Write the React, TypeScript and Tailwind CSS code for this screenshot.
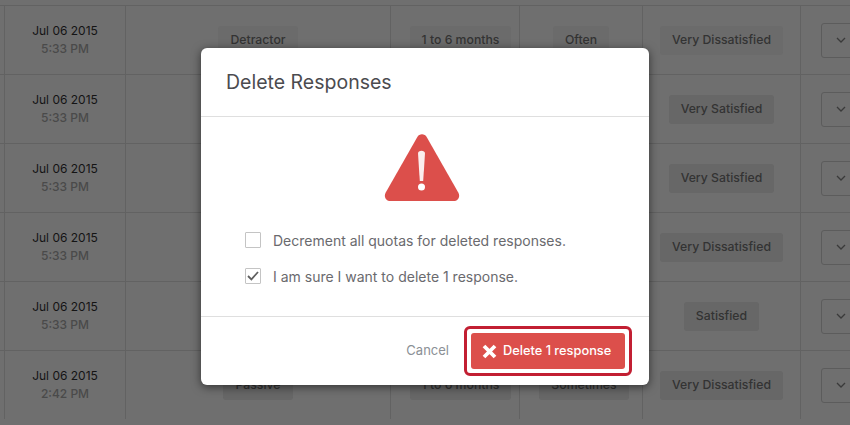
import React from 'react';

const font = { fontFamily: '"Inter", "Liberation Sans", sans-serif' };

const rows = [
  { time: '5:33 PM', nps: 'Detractor', tenure: '1 to 6 months', freq: 'Often', sat: 'Very Dissatisfied', faint: true },
  { time: '5:33 PM', nps: '', tenure: '', freq: '', sat: 'Very Satisfied' },
  { time: '5:33 PM', nps: '', tenure: '', freq: '', sat: 'Very Satisfied' },
  { time: '5:33 PM', nps: '', tenure: '', freq: '', sat: 'Very Dissatisfied' },
  { time: '5:33 PM', nps: '', tenure: '', freq: '', sat: 'Satisfied' },
  { time: '2:42 PM', nps: 'Passive', tenure: '1 to 6 months', freq: 'Sometimes', sat: 'Very Dissatisfied', shift: true },
];

const gridCols = 'grid grid-cols-[5px_121px_265px_129px_123px_158px_49px]';

const Chip = ({ label, faint, className = '' }: { label: string; faint?: boolean; className?: string }) =>
  label ? (
    <span className={`h-[29px] px-[12px] flex items-center rounded-[3px] text-[12.25px] font-medium text-[#333333] ${faint ? 'bg-[#6b6b6b]' : 'bg-[#676767]'} ${className}`}>
      {label}
    </span>
  ) : null;

const Cell = ({ children, className = '' }: { children?: React.ReactNode; className?: string }) => (
  <div className={`flex items-center justify-center border-r border-[#626262] ${className}`}>{children}</div>
);

const App: React.FC = () => {
  return (
    <div className="relative w-[850px] h-[425px] overflow-hidden bg-[#6f6f6f]" style={font}>
      <div className="h-[5px]" />
      {rows.map((row, i) => (
        <div key={i} className={`${gridCols} h-[69px] border-t border-[#626262]`}>
          <Cell />
          <Cell>
            <div className="text-center leading-[18px]">
              <div className="text-[12px] text-[#141414]">Jul 06 2015</div>
              <div className="text-[12px] font-medium text-[#4a4a4a]">{row.time}</div>
            </div>
          </Cell>
          <Cell><Chip label={row.nps} faint={row.faint} /></Cell>
          <Cell className="pl-[11px]"><Chip label={row.tenure} faint={row.faint} /></Cell>
          <Cell><Chip label={row.freq} faint={row.faint} className={row.shift ? 'ml-[6px]' : ''} /></Cell>
          <Cell><Chip label={row.sat} faint={row.faint} /></Cell>
          <div className="flex items-center pl-[20px]">
            <div className="w-[40px] h-[35px] shrink-0 rounded-[3px] border border-[#5c5c5c] flex items-center pl-[14px]">
              <svg width="10" height="6" viewBox="0 0 10 6" fill="none" stroke="#3a3a3a" strokeWidth="1.3">
                <path d="M1 1l4 4 4-4" />
              </svg>
            </div>
          </div>
        </div>
      ))}

      {/* modal */}
      <div className="absolute left-[201px] top-[48px] w-[448px] h-[337px] bg-white rounded-[6px] shadow-[0_2px_10px_rgba(0,0,0,0.55)] flex flex-col">
        <div className="h-[69px] border-b border-[#dfdfdf] flex items-center pl-[25px] shrink-0">
          <h2 className="text-[19.5px] font-normal text-[#4b4b4f] pt-[2px]">Delete Responses</h2>
        </div>

        <div className="flex-1 flex flex-col">
          <div className="pt-[17px] pr-[7px] flex justify-center">
            <svg width="76" height="68" viewBox="0 0 76 68">
              <path
                d="M33.2 3.2c2.2-3.8 7.4-3.8 9.6 0l31.6 55.6c2.1 3.8-.4 8.2-4.8 8.2H6.4c-4.4 0-6.9-4.4-4.8-8.2z"
                fill="#dc4f4b"
              />
              <path d="M34 19.5c0-1.6 1.6-2.7 3.5-2.7s3.5 1.1 3.5 2.7L39.2 47h-3.4z" fill="#fbeeee" />
              <circle cx="37.5" cy="53" r="3.5" fill="#ffffff" />
            </svg>
          </div>
          <div className="mt-[30px] pl-[44px] flex flex-col gap-[20px] text-[14px] text-[#6a6a6e]">
            <label className="flex items-center h-[16px] gap-[12px]">
              <span className="w-[16px] h-[16px] border border-[#c4c4c4] rounded-[1px]" />
              <span>Decrement all quotas for deleted responses.</span>
            </label>
            <label className="flex items-center h-[16px] gap-[12px]">
              <span className="w-[16px] h-[16px] border border-[#c4c4c4] rounded-[1px] flex items-center justify-center">
                <svg width="12" height="10" viewBox="0 0 12 10" fill="none" stroke="#5f5f5f" strokeWidth="1.8">
                  <path d="M1 5l3.4 3.4L11 1" />
                </svg>
              </span>
              <span>I am sure I want to delete 1 response.</span>
            </label>
          </div>
        </div>

        <div className="h-[69px] border-t border-[#dfdfdf] flex items-center justify-end pr-[17px] shrink-0">
          <span className="text-[13px] text-[#8b9096] mr-[15px]">Cancel</span>
          <div className="border-[3px] border-[#c21f32] rounded-[6px] p-[4px]">
            <button className="w-[154px] h-[36px] bg-[#dc4f4b] rounded-[3px] flex items-center pl-[11px] gap-[6px] text-white text-[12.8px] font-medium">
              <svg width="15" height="15" viewBox="0 0 15 15" fill="none" stroke="#ffffff" strokeWidth="3.8">
                <path d="M2 2l11 11M13 2L2 13" />
              </svg>
              Delete 1 response
            </button>
          </div>
        </div>
      </div>
    </div>
  );
};

export default App;
